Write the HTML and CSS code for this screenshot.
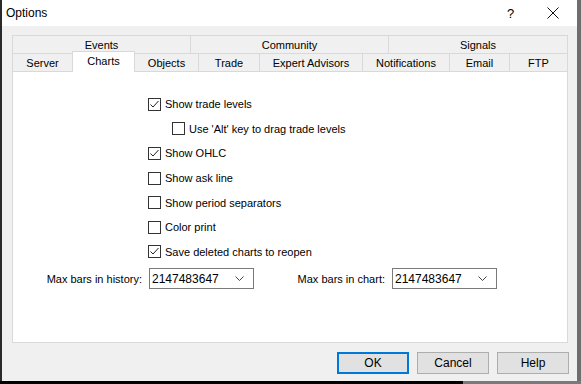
FILE: index.html
```html
<!DOCTYPE html>
<html lang="en">
<head>
    <meta charset="UTF-8">
    <title>Options</title>
    <link rel="stylesheet" href="styles.css">
</head>
<body>
    <div class="screen">
        <div class="window">
            <div class="titlebar">
                <span class="title">Options</span>
                <span class="help">?</span>
                <span class="close">
                    <svg width="12" height="12" viewBox="0 0 12 12"><path d="M0.5 0.5 L11.5 11.5 M11.5 0.5 L0.5 11.5" stroke="#111" stroke-width="1" fill="none"/></svg>
                </span>
            </div>
            <div class="content">
                <div class="tabs">
                    <div class="tab-row row-top">
                        <div class="tab">Events</div>
                        <div class="tab">Community</div>
                        <div class="tab last">Signals</div>
                    </div>
                    <div class="tab-row row-bottom">
                        <div class="tab">Server</div>
                        <div class="tab active">Charts</div>
                        <div class="tab">Objects</div>
                        <div class="tab">Trade</div>
                        <div class="tab">Expert Advisors</div>
                        <div class="tab">Notifications</div>
                        <div class="tab">Email</div>
                        <div class="tab last">FTP</div>
                    </div>
                </div>
                <div class="panel">
                    <div class="checks">
                        <div class="check checked"><span class="box"><svg width="11" height="11" viewBox="0 0 11 11"><path d="M1.5 5.5 L4 8 L9.5 2" stroke="#222" stroke-width="1" fill="none"/></svg></span>Show trade levels</div>
                        <div class="check sub"><span class="box"></span>Use 'Alt' key to drag trade levels</div>
                        <div class="check checked"><span class="box"><svg width="11" height="11" viewBox="0 0 11 11"><path d="M1.5 5.5 L4 8 L9.5 2" stroke="#222" stroke-width="1" fill="none"/></svg></span>Show OHLC</div>
                        <div class="check"><span class="box"></span>Show ask line</div>
                        <div class="check"><span class="box"></span>Show period separators</div>
                        <div class="check"><span class="box"></span>Color print</div>
                        <div class="check checked"><span class="box"><svg width="11" height="11" viewBox="0 0 11 11"><path d="M1.5 5.5 L4 8 L9.5 2" stroke="#222" stroke-width="1" fill="none"/></svg></span>Save deleted charts to reopen</div>
                    </div>
                    <div class="combos">
                        <span class="combo-label first">Max bars in history:</span>
                        <div class="combo">
                            <span>2147483647</span>
                            <svg width="9" height="5" viewBox="0 0 9 5"><path d="M0.5 0.5 L4.5 4.5 L8.5 0.5" stroke="#444" stroke-width="1" fill="none"/></svg>
                        </div>
                        <span class="combo-label second">Max bars in chart:</span>
                        <div class="combo">
                            <span>2147483647</span>
                            <svg width="9" height="5" viewBox="0 0 9 5"><path d="M0.5 0.5 L4.5 4.5 L8.5 0.5" stroke="#444" stroke-width="1" fill="none"/></svg>
                        </div>
                    </div>
                </div>
                <div class="buttons">
                    <a class="btn default" href="#">OK</a>
                    <a class="btn" href="#">Cancel</a>
                    <a class="btn" href="#">Help</a>
                </div>
            </div>
        </div>
        <div class="edge"></div>
    </div>
    <div class="floor"></div>
</body>
</html>
```

FILE: styles.css
```css
body {
    margin: 0;
    width: 581px;
    height: 384px;
    overflow: hidden;
    background-color: #111111;
    font-family: 'Liberation Sans', Arial, sans-serif;
    font-size: 11px;
    color: #000000;
}

.screen {
    display: flex;
    height: 381px;
    padding-left: 2px;
    background-color: #2a2a2a;
}

.window {
    width: 575px;
    height: 381px;
    background-color: #f0f0f0;
    display: flex;
    flex-direction: column;
}

.edge {
    flex: 1;
    background-color: #6e6e6e;
}

.floor {
    height: 3px;
    background: linear-gradient(to right, #000 0, #000 463px, #7a7a7a 463px);
}

/* Barre de titre */
.titlebar {
    height: 26px;
    background-color: #ffffff;
    display: flex;
    align-items: center;
    padding-left: 4px;
}

.title {
    flex: 1;
    font-size: 12px;
}

.help {
    width: 12px;
    margin-right: 28px;
    font-size: 13px;
}

.close {
    display: flex;
    margin-right: 18px;
}

.content {
    flex: 1;
    display: flex;
    flex-direction: column;
    padding: 9px 9px 0 10px;
}

/* Onglets */
.tab-row {
    display: grid;
    height: 18px;
}

.row-top {
    grid-template-columns: 178px 198px 180px;
}

.row-bottom {
    grid-template-columns: 60px 62px 64px 61px 103px 87px 60px 59px;
}

.tab {
    display: flex;
    align-items: center;
    justify-content: center;
    border-top: 1px solid #d9d9d9;
    border-left: 1px solid #d9d9d9;
    background-color: #f0f0f0;
    padding-top: 1px;
}

.tab.last {
    border-right: 1px solid #d9d9d9;
}

.tab.active {
    position: relative;
    z-index: 1;
    background-color: #ffffff;
    margin-top: -2px;
    margin-bottom: -1px;
    border-right: 1px solid #d9d9d9;
    margin-right: -1px;
    padding-top: 0;
    padding-bottom: 3px;
}

.panel {
    height: 272px;
    box-sizing: border-box;
    border: 1px solid #d9d9d9;
    background-color: #ffffff;
    padding: 20px 0 0 135px;
}

/* Cases a cocher */
.check {
    height: 24.6px;
    display: flex;
    align-items: center;
}

.check.sub {
    padding-left: 24px;
}

.box {
    width: 11px;
    height: 11px;
    border: 1px solid #333333;
    background-color: #ffffff;
    margin-right: 4px;
    display: flex;
}

.combos {
    display: flex;
    align-items: center;
    margin-left: -135px;
    margin-top: 4px;
}

.combo-label {
    text-align: right;
    margin-right: 7px;
}

.combo-label.first {
    width: 129px;
}

.combo-label.second {
    width: 131px;
}

.combo {
    height: 19px;
    border: 1px solid #7a7a7a;
    background-color: #ffffff;
    display: flex;
    align-items: center;
    justify-content: space-between;
    padding: 0 9px 0 2px;
    width: 92px;
    font-size: 12px;
}

/* Boutons */
.buttons {
    display: flex;
    justify-content: flex-end;
    gap: 8px;
    padding: 9px 8px 0 0;
    margin-right: -9px;
}

.btn {
    width: 72px;
    height: 22px;
    box-sizing: border-box;
    display: flex;
    align-items: center;
    justify-content: center;
    background-color: #e1e1e1;
    border: 1px solid #adadad;
    color: #000000;
    text-decoration: none;
    font-size: 12px;
}

.btn.default {
    border: 2px solid #0078d7;
}
```
